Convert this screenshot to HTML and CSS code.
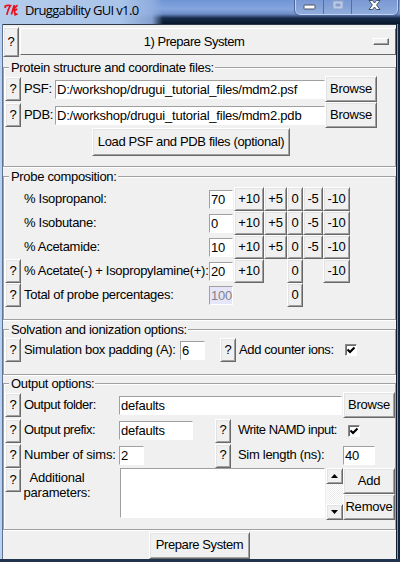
FILE: index.html
```html
<!DOCTYPE html>
<html lang="en">
<head>
<meta charset="utf-8">
<title>Druggability GUI v1.0</title>
<link rel="stylesheet" href="styles.css">
</head>
<body>
<div class="window">
  <header class="titlebar">
    <svg class="logo" viewBox="0 0 15 13" width="15" height="13"><path d="M1 2.2Q3 .9 6.4 1.5Q4 5 2.8 10.8M1.2 1.8V4M10.3 1L7.4 10.5M13.6 1.2Q10.4 3 9.6 7M9.8 7.2Q12 6.3 13.2 4.8M10.4 7L11.2 10.8L13.6 9.8" fill="none" stroke="#e8101c" stroke-width="1.7"/></svg>
    <span class="title">Druggability GUI v1.0</span>
    <div class="controls">
      <span class="control"><svg width="14" height="7"><rect x="1" y="1" width="11" height="4" rx=".5" fill="#fff" stroke="#46516b"/></svg></span>
      <span class="control"><svg width="12" height="10"><rect x="1" y="1" width="10" height="8" fill="#bccbe6" stroke="#8ea3ca"/><rect x="4" y="4" width="4" height="2" fill="#7890c2" stroke="#8ea3ca"/></svg></span>
      <span class="control wide"><svg width="13" height="11"><path d="M1 .5H4.5L6.5 3L8.5 .5H12L8.6 5L12 9.5H8.5L6.5 7L4.5 9.5H1L4.4 5Z" fill="#fff" stroke="#46516b"/></svg></span>
    </div>
  </header>
  <main class="client">
    <div class="menu-row">
      <button class="help tall">?</button>
      <div class="menu"><span>1) Prepare System</span><i class="indicator"></i></div>
    </div>

    <section class="group structure">
      <h2>Protein structure and coordinate files:</h2>
      <div class="row file">
        <button class="help">?</button><label>PSF:</label>
        <div class="input path">D:/workshop/drugui_tutorial_files/mdm2.psf</div><button class="btn">Browse</button>
      </div>
      <div class="row file">
        <button class="help">?</button><label>PDB:</label>
        <div class="input path">D:/workshop/drugui_tutorial_files/mdm2.pdb</div><button class="btn">Browse</button>
      </div>
      <button class="btn load">Load PSF and PDB files (optional)</button>
    </section>

    <section class="group probes">
      <h2>Probe composition:</h2>
      <div class="row probe"><span></span><label>% Isopropanol:</label><div class="input">70</div><button class="btn">+10</button><button class="btn">+5</button><button class="btn">0</button><button class="btn">-5</button><button class="btn">-10</button></div>
      <div class="row probe"><span></span><label>% Isobutane:</label><div class="input">0</div><button class="btn">+10</button><button class="btn">+5</button><button class="btn">0</button><button class="btn">-5</button><button class="btn">-10</button></div>
      <div class="row probe"><span></span><label>% Acetamide:</label><div class="input">10</div><button class="btn">+10</button><button class="btn">+5</button><button class="btn">0</button><button class="btn">-5</button><button class="btn">-10</button></div>
      <div class="row probe"><button class="help">?</button><label>% Acetate(-) + Isopropylamine(+):</label><div class="input">20</div><button class="btn">+10</button><span></span><button class="btn">0</button><span></span><button class="btn">-10</button></div>
      <div class="row probe"><button class="help">?</button><label>Total of probe percentages:</label><div class="input total">100</div><span></span><span></span><button class="btn">0</button></div>
    </section>

    <section class="group solvation">
      <h2>Solvation and ionization options:</h2>
      <div class="row solv">
        <button class="help">?</button><label>Simulation box padding (A):</label><div class="input">6</div>
        <button class="help">?</button><label class="snug">Add counter ions:</label>
        <span class="check"><svg width="8" height="8" viewBox="0 0 8 8"><path d="M.5 3.5L3 6L7.5 1.5" fill="none" stroke="#000" stroke-width="2.2"/></svg></span>
      </div>
    </section>

    <section class="group output">
      <h2>Output options:</h2>
      <div class="row folder">
        <button class="help">?</button><label class="tight">Output folder:</label><div class="input">defaults</div><button class="btn">Browse</button>
      </div>
      <div class="row pair">
        <button class="help">?</button><label class="tight">Output prefix:</label><div class="input prefix">defaults</div>
        <button class="help">?</button><label class="tight">Write NAMD input:</label>
        <span class="check"><svg width="8" height="8" viewBox="0 0 8 8"><path d="M.5 3.5L3 6L7.5 1.5" fill="none" stroke="#000" stroke-width="2.2"/></svg></span>
      </div>
      <div class="row pair">
        <button class="help">?</button><label class="loose">Number of sims:</label><div class="input sims">2</div>
        <button class="help">?</button><label>Sim length (ns):</label><div class="input length">40</div>
      </div>
      <div class="extra">
        <button class="help">?</button>
        <label>Additional<br>parameters:</label>
        <div class="input area"></div>
        <div class="scrollbar">
          <button class="arrow"><svg width="7" height="4"><path d="M0 4L3.5 0L7 4Z"/></svg></button>
          <button class="arrow"><svg width="7" height="4"><path d="M0 0L3.5 4L7 0Z"/></svg></button>
        </div>
        <div class="actions"><button class="btn">Add</button><button class="btn">Remove</button></div>
      </div>
    </section>

    <footer><button class="btn prepare">Prepare System</button></footer>
  </main>
</div>
</body>
</html>
```

FILE: styles.css
```css
* { box-sizing: border-box; }
body { margin: 0; font: 13px/16px "Liberation Sans", Arial, sans-serif; letter-spacing: -0.22px; color: #000; }
button { font: inherit; letter-spacing: inherit; color: inherit; margin: 0; padding: 0; border-radius: 0; white-space: nowrap; }
label { white-space: nowrap; }

.window {
  width: 400px; height: 562px; display: flex; flex-direction: column; overflow: hidden;
  border-bottom: 3px solid #21334f;
  background: linear-gradient(90deg, #b9d1f2 0 2px, #5f7290 2px 3px, transparent 3px 396px, #101c30 396px 397px, #8797ad 397px 398px, #14243c 398px), #f0f0f0;
}
.titlebar {
  height: 24px; flex: none; display: flex; align-items: flex-start; padding-left: 4px;
  background:
    linear-gradient(90deg, #b5cceb 0, #a9c4e9 120px, rgba(145,174,222,.9) 152px, transparent 163px),
    linear-gradient(#6f94d5 0, #85a6de 9px, #6d8dc6 14px, #172b4b 18px, #081629 24px);
}
.logo { margin-top: 4px; }
.title { margin: 1px 0 0 6px; font: 13px/18px "Open Sans", "Noto Sans", sans-serif; letter-spacing: -0.65px; white-space: nowrap; }
.controls { margin-left: auto; margin-right: 2px; width: 103px; height: 15px; display: flex; border: 1px solid #c1d2ee; border-top: 0; border-radius: 0 0 5px 5px; background: linear-gradient(#7998d3, #91addd); outline: 1px solid #4b679b; }
.control { width: 28px; display: flex; align-items: center; justify-content: center; border-right: 1px solid #536fa3; }
.control:first-child { padding-top: 1px; }
.control:nth-child(2) { padding-bottom: 4px; }
.control.wide { flex: 1; border-right: 0; padding-bottom: 4px; }

.client { margin: 0 4px 0 3px; height: 535px; border-top: 1px solid #303b4a; background: #f0f0f0; display: flex; flex-direction: column; }

.btn, .help, .menu, .arrow {
  background: #f0f0f0; border: 1px solid; border-color: #fff #696969 #696969 #fff;
  box-shadow: inset 1px 1px #e3e3e3, inset -1px -1px #a0a0a0;
  display: flex; align-items: center; justify-content: center;
}
.btn, .help { padding-bottom: 1px; }
.help { width: 16px; height: 24px; flex: none; }
.help.tall { height: 30px; }
.menu-row { display: flex; margin-top: 2px; height: 30px; gap: 1px; }
.menu { flex: 1; height: 27px; margin-top: 1px; position: relative; box-shadow: none; padding-right: 28px; letter-spacing: -0.45px; }
.indicator { position: absolute; right: 6px; top: 9px; width: 16px; height: 7px; border: 1px solid; border-color: #fff #696969 #696969 #fff; box-shadow: inset -1px -1px #a0a0a0; }

.group { flex: none; border: 1px solid #a0a0a0; box-shadow: inset 1px 1px #fff, 0 1px #fff; padding-left: 1px; width: 393px; }
.group h2 { font: inherit; letter-spacing: -0.32px; width: fit-content; margin: -8px 0 0 4px; padding: 0 1px 0 2px; height: 16px; background: #f0f0f0; white-space: nowrap; }
.structure { margin-top: 10px; height: 100px; }
.probes { margin-top: 9px; height: 144px; }
.solvation { margin-top: 9px; height: 46px; }
.output { margin-top: 8px; height: 147px; }

.row { display: grid; align-items: center; }
.row label { padding: 0 0 1px 3px; letter-spacing: -0.3px; }
.row label.snug { letter-spacing: -0.38px; }
.row label.tight { letter-spacing: -0.5px; }
.row label.loose { letter-spacing: -0.2px; }
.input { height: 19px; background: #fff; border: 1px solid; border-color: #a0a0a0 #fff #fff #a0a0a0; padding-left: 1px; line-height: 17px; white-space: nowrap; overflow: hidden; }

.file { grid-template-columns: 16px 34px 270px 52px; height: 26px; }
.file .btn { height: 26px; }
.load { width: 198px; height: 28px; margin-left: 87px; letter-spacing: -0.35px; }

.probes .row:nth-child(2) { margin-top: 2px; }
.probe { grid-template-columns: 16px 188px 25px 30px 23px 16px 20px 27px; height: 24px; }
.probe .btn { height: 24px; }
.probe .input { width: 24px; }
.probe .input.total { background: #e6e6fa; color: #838383; }

.solv { grid-template-columns: 16px 159px 40px 16px 109px 13px; height: 24px; }
.solv .input { width: 25px; }
.check { width: 12px; height: 12px; background: #fff; border: 1px solid; border-color: #888 #fff #fff #888; box-shadow: inset 1px 1px #696969; display: flex; align-items: center; justify-content: center; }

.folder { grid-template-columns: 16px 98px 224px 52px; height: 26px; }
.folder .input { width: 223px; }
.folder .btn { height: 26px; }
.pair { grid-template-columns: 16px 98px 96px 16px 112px 52px; height: 25px; }
.pair .check { margin-left: 5px; }
.pair label:nth-of-type(2) { padding-left: 7px; }
.prefix { width: 74px; }
.sims { width: 25px; }
.length { width: 32px; }
.extra { display: grid; grid-template-columns: 16px 99px 206px 17px 52px; align-items: start; height: 52px; }
.extra label { text-align: center; padding-top: 2px; width: 72px; line-height: 15px; }
.area { width: 205px; height: 50px; }
.scrollbar { height: 52px; display: flex; flex-direction: column; justify-content: space-between; background: repeating-conic-gradient(#fff 0 25%, #ececec 0 50%) 0 0 / 2px 2px; }
.arrow { height: 16px; }
.actions .btn { width: 52px; height: 26px; }

footer { display: flex; padding-left: 146px; margin-top: 2px; }
.prepare { width: 101px; height: 27px; letter-spacing: -0.4px; }
```
